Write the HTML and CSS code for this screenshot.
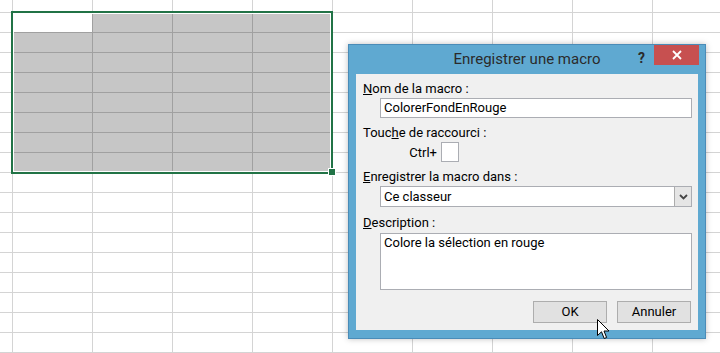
FILE: index.html
```html
<!DOCTYPE html>
<html lang="fr">
<head>
    <meta charset="UTF-8">
    <title>Enregistrer une macro</title>
    <link rel="stylesheet" href="styles.css">
</head>
<body>
    <div class="sheet">
        <div class="selection">
            <div class="cell active"></div><div class="cell"></div><div class="cell"></div><div class="cell"></div>
            <div class="cell"></div><div class="cell"></div><div class="cell"></div><div class="cell"></div>
            <div class="cell"></div><div class="cell"></div><div class="cell"></div><div class="cell"></div>
            <div class="cell"></div><div class="cell"></div><div class="cell"></div><div class="cell"></div>
            <div class="cell"></div><div class="cell"></div><div class="cell"></div><div class="cell"></div>
            <div class="cell"></div><div class="cell"></div><div class="cell"></div><div class="cell"></div>
            <div class="cell"></div><div class="cell"></div><div class="cell"></div><div class="cell"></div>
            <div class="cell"></div><div class="cell"></div><div class="cell"></div><div class="cell"></div>
            <span class="fill-handle"></span>
        </div>

        <div class="dialog">
            <div class="titlebar">
                <span class="title">Enregistrer une macro</span>
                <span class="help">?</span>
                <span class="close">
                    <svg width="10" height="10" viewBox="0 0 10 10">
                        <path d="M1 1 L9 9 M9 1 L1 9" stroke="#fff" stroke-width="1.8" fill="none"/>
                    </svg>
                </span>
            </div>
            <div class="client">
                <div class="field-label"><u>N</u>om de la macro :</div>
                <div class="textbox">ColorerFondEnRouge</div>

                <div class="field-label gap"><span>Touc<u>h</u>e de raccourci :</span></div>
                <div class="shortcut">
                    <span class="ctrl-label">Ctrl+</span>
                    <span class="key-box"></span>
                </div>

                <div class="field-label gap"><u>E</u>nregistrer la macro dans :</div>
                <div class="select">
                    <span class="select-value">Ce classeur</span>
                    <span class="select-btn">
                        <svg width="9" height="6" viewBox="0 0 9 6">
                            <path d="M1 1 L4.5 4.5 L8 1" stroke="#444" stroke-width="1.8" fill="none"/>
                        </svg>
                    </span>
                </div>

                <div class="field-label gap-desc"><u>D</u>escription :</div>
                <div class="textarea">Colore la sélection en rouge</div>

                <div class="buttons">
                    <span class="btn">OK</span>
                    <span class="btn">Annuler</span>
                </div>
            </div>
        </div>

        <svg class="cursor" width="13" height="21" viewBox="0 0 13 21">
            <path d="M0.5 0.5 L0.5 16.5 L4.5 12.8 L7.2 19.5 L9.6 18.5 L7 12 L12 12 Z" fill="#fff" stroke="#000" stroke-width="1" stroke-linejoin="miter"/>
        </svg>
    </div>
</body>
</html>
```

FILE: styles.css
```css
body {
    margin: 0;
    background: #fff;
    font-family: Roboto, "Noto Sans", sans-serif;
}

/* worksheet grid: 80x20 cells, first lines at 12px */
.sheet {
    position: relative;
    width: 720px;
    height: 353px;
    overflow: hidden;
    display: grid;
    grid-template-columns: 12px repeat(9, 80px);
    grid-template-rows: 12px repeat(17, 20px);
    background-image:
        linear-gradient(to right, #d4d4d4 1px, transparent 1px),
        linear-gradient(to bottom, #d4d4d4 1px, transparent 1px);
    background-size: 80px 20px;
    background-position: 12px 12px;
}

.selection {
    grid-column: 2 / 6;
    grid-row: 2 / 10;
    margin: -1px -1px -2px -1px;
    position: relative;
    border: 2px solid #217346;
    padding: 1px;
    background: #fff;
    display: grid;
    grid-template-columns: 78px 80px 80px 78px;
    grid-template-rows: 18px repeat(6, 20px) 19px;
}

.cell {
    background: #c6c6c6;
    border-left: 1px solid #a0a0a0;
    border-top: 1px solid #a0a0a0;
}
.cell:nth-child(4n+1) {
    border-left: none;
}
.cell:nth-child(-n+4) {
    border-top: none;
}
.cell.active {
    background: #fff;
}

.fill-handle {
    position: absolute;
    left: 315px;
    top: 155px;
    width: 6px;
    height: 6px;
    background: #217346;
    border: 1px solid #fff;
}

/* dialog window */
.dialog {
    position: absolute;
    left: 348px;
    top: 44px;
    width: 358px;
    height: 295px;
    box-sizing: border-box;
    background: #5fa9d1;
    border: 1px solid #4a8cb8;
    box-shadow: 0 0 6px rgba(0, 0, 0, 0.25);
    display: flex;
    flex-direction: column;
}

.titlebar {
    position: relative;
    height: 29px;
    flex-shrink: 0;
    text-align: center;
}

.title {
    font-size: 15px;
    line-height: 29px;
    color: #2b2b2b;
}

.help {
    position: absolute;
    left: 289px;
    top: 5px;
    font-size: 14px;
    font-weight: bold;
    color: #2b2b2b;
    line-height: 16px;
}

.close {
    position: absolute;
    right: 6px;
    top: 0;
    width: 45px;
    height: 20px;
    background: #c75050;
    display: flex;
    align-items: center;
    justify-content: center;
}

.client {
    flex: 1;
    margin: 0 7px 8px 7px;
    background: #f0f0f0;
    padding: 7px 6px 0 7px;
    font-size: 13px;
    color: #000;
}

.field-label {
    height: 16px;
    line-height: 16px;
    margin-bottom: 1px;
}
.field-label.gap {
    margin-top: 7px;
}
.field-label.gap-desc {
    margin-top: 8px;
    margin-bottom: 2px;
}

.textbox,
.select,
.textarea {
    margin-left: 17px;
    box-sizing: border-box;
    background: #fff;
    border: 1px solid #abadb3;
}

.textbox {
    height: 20px;
    line-height: 18px;
    padding-left: 3px;
}

.shortcut {
    display: flex;
    align-items: center;
    height: 20px;
}
.ctrl-label {
    width: 74px;
    text-align: right;
}
.key-box {
    margin-left: 4px;
    width: 18px;
    height: 20px;
    box-sizing: border-box;
    background: #fff;
    border: 1px solid #abadb3;
}

.select {
    height: 21px;
    display: flex;
    align-items: center;
    padding-left: 3px;
}
.select-value {
    flex: 1;
}
.select-btn {
    width: 17px;
    height: 19px;
    box-sizing: border-box;
    background: #e5e5e5;
    border-left: 1px solid #acacac;
    display: flex;
    align-items: center;
    justify-content: center;
}

.textarea {
    height: 57px;
    padding: 1px 3px;
    line-height: 16px;
}

.buttons {
    display: flex;
    justify-content: flex-end;
    gap: 10px;
    margin-top: 11px;
    margin-right: 1px;
}

.btn {
    width: 74px;
    height: 22px;
    box-sizing: border-box;
    background: #e1e1e1;
    border: 1px solid #adadad;
    text-align: center;
    line-height: 20px;
}

.cursor {
    position: absolute;
    left: 597px;
    top: 319px;
}
```
